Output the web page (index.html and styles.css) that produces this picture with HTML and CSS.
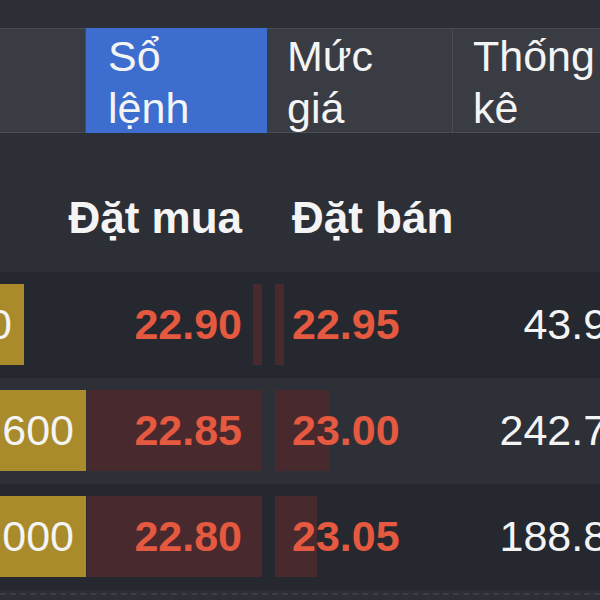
FILE: index.html
```html
<!DOCTYPE html>
<html lang="vi">
<head>
<meta charset="UTF-8" />
<meta name="viewport" content="width=device-width, initial-scale=1" />
<title>Sổ lệnh</title>
<link rel="stylesheet" href="styles.css">
</head>
<body>
<div class="tabs">
  <div class="tab tab-empty"></div>
  <div class="tab active"><span class="tab-label">Sổ lệnh</span></div>
  <div class="tab tab-price"><span class="tab-label">Mức giá</span></div>
  <div class="tab tab-stats"><span class="tab-label">Thống kê</span></div>
</div>

<div class="book-head">
  <div></div>
  <div class="head-buy">Đặt mua</div>
  <div class="head-sell">Đặt bán</div>
  <div></div>
</div>

<div class="book">
  <div class="row">
    <div class="vol-cell"><span class="vol" style="width:24px">1,100</span></div>
    <div class="bid"><span class="depth" style="width:9px"></span><span class="price">22.90</span></div>
    <div class="ask"><span class="depth" style="width:9px"></span><span class="price">22.95</span></div>
    <div class="total">43.90</div>
  </div>
  <div class="row">
    <div class="vol-cell"><span class="vol" style="width:86px">12,600</span></div>
    <div class="bid"><span class="depth" style="width:175px"></span><span class="price">22.85</span></div>
    <div class="ask"><span class="depth" style="width:55px"></span><span class="price">23.00</span></div>
    <div class="total">242.70</div>
  </div>
  <div class="row">
    <div class="vol-cell"><span class="vol" style="width:86px">15,000</span></div>
    <div class="bid"><span class="depth" style="width:175px"></span><span class="price">22.80</span></div>
    <div class="ask"><span class="depth" style="width:42px"></span><span class="price">23.05</span></div>
    <div class="total">188.80</div>
  </div>
</div>
<div class="book-foot"></div>
</body>
</html>
```

FILE: styles.css
```css
html, body {
  margin: 0; padding: 0;
  background: #2c2f36;
  overflow: hidden;
}
body {
  width: 600px;
  height: 600px;
  font-family: "Liberation Sans", Arial, sans-serif;
  color: #f4f4f4;
}

/* tabs */
.tabs {
  display: flex;
  margin-top: 28px;
  height: 105px;
}
.tab {
  box-sizing: border-box;
  background: #393c43;
  border-top: 1px solid #4a4d54;
  border-bottom: 1px solid #4a4d54;
  border-right: 1px solid #4a4d54;
  padding: 1px 0 0 20px;
  font-size: 43px;
  line-height: 52px;
}
.tab-label {
  display: block;
  width: min-content;
}
.tab-empty { width: 86px; }
.tab.active {
  width: 181px;
  padding-left: 22px;
  background: #3d6ecf;
  border-color: #3d6ecf;
}
.tab-price { width: 186px; }
.tab-stats { flex: 1; border-right: none; }

/* order book */
.book-head, .row {
  display: grid;
  grid-template-columns: 86px 176px 190px 179px;
  width: 631px;
}
.book-head {
  box-sizing: border-box;
  height: 139px;
  padding-top: 60px;
  font-size: 44px;
  font-weight: bold;
  line-height: 50px;
  white-space: nowrap;
}
.head-buy {
  display: flex;
  justify-content: flex-end;
  padding-right: 20px;
}
.head-sell { padding-left: 30px; }

.row {
  box-sizing: border-box;
  height: 106px;
  padding-top: 12px;
  background: #25282f;
  font-size: 43px;
  line-height: 81px;
}
.row:nth-child(even) { background: #2d3037; }
.row > div { height: 81px; }

.vol {
  display: flex;
  justify-content: flex-end;
  box-sizing: border-box;
  height: 81px;
  padding-right: 12px;
  overflow: hidden;
  white-space: nowrap;
  background: #a98b2b;
}
.bid, .ask { position: relative; }
.bid {
  margin-left: 1px;
  text-align: right;
  padding-right: 20px;
}
.ask {
  margin-left: 13px;
  padding-left: 17px;
}
.depth {
  position: absolute;
  top: 0; bottom: 0;
  background: #47292e;
}
.bid .depth { right: 0; }
.ask .depth { left: 0; }
.price {
  position: relative;
  color: #e4593f;
  font-weight: bold;
}
.total {
  text-align: right;
  white-space: nowrap;
}
.book-foot {
  margin-top: 3px;
  border-top: 2px dashed #3b3e45;
}
```
